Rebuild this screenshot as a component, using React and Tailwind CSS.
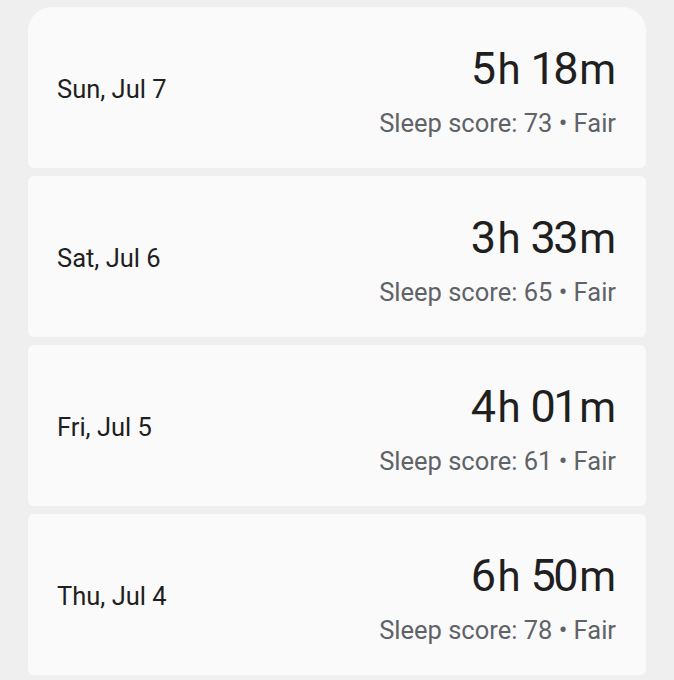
const nights = [
  { date: "Sun, Jul 7", h: "5", m: "18", score: 73, label: "Fair" },
  { date: "Sat, Jul 6", h: "3", m: "33", score: 65, label: "Fair" },
  { date: "Fri, Jul 5", h: "4", m: "01", score: 61, label: "Fair" },
  { date: "Thu, Jul 4", h: "6", m: "50", score: 78, label: "Fair" },
];

function NightCard({ night, first }) {
  const corners = first ? "rounded-t-[24px] rounded-b-[6px]" : "rounded-[6px]";

  return (
    <div
      className={`flex h-[161px] justify-between bg-[#fafafa] pl-[29px] pr-[30px] ${corners}`}
    >
      <div className="mt-[2px] self-center text-[25.5px] leading-[32px] text-[#1f1f1f]">
        {night.date}
      </div>
      <div className="flex flex-col items-end pt-[34px]">
        <div className="flex items-baseline text-[#1f1f1f] leading-[56px]">
          <span className="text-[45px] tracking-[-2.5px]">{night.h}</span>
          <span className="ml-[4px] text-[42px]">h</span>
          <span className="ml-[10px] text-[45px] tracking-[-2.5px]">
            {night.m}
          </span>
          <span className="ml-[3px] text-[42px]">m</span>
        </div>
        <div className="mt-[9px] text-[25.5px] leading-[32px] text-[#5f6368]">
          Sleep score: {night.score} • {night.label}
        </div>
      </div>
    </div>
  );
}

export default function App() {
  return (
    <div
      className="min-h-[680px] w-full bg-[#efefef] pt-[7px] pl-[28px] pr-[28px]"
      style={{ fontFamily: "Roboto, 'Noto Sans', sans-serif" }}
    >
      <div className="flex flex-col gap-[8px]">
        {nights.map((n, i) => (
          <NightCard key={n.date} night={n} first={i === 0} />
        ))}
      </div>
    </div>
  );
}
